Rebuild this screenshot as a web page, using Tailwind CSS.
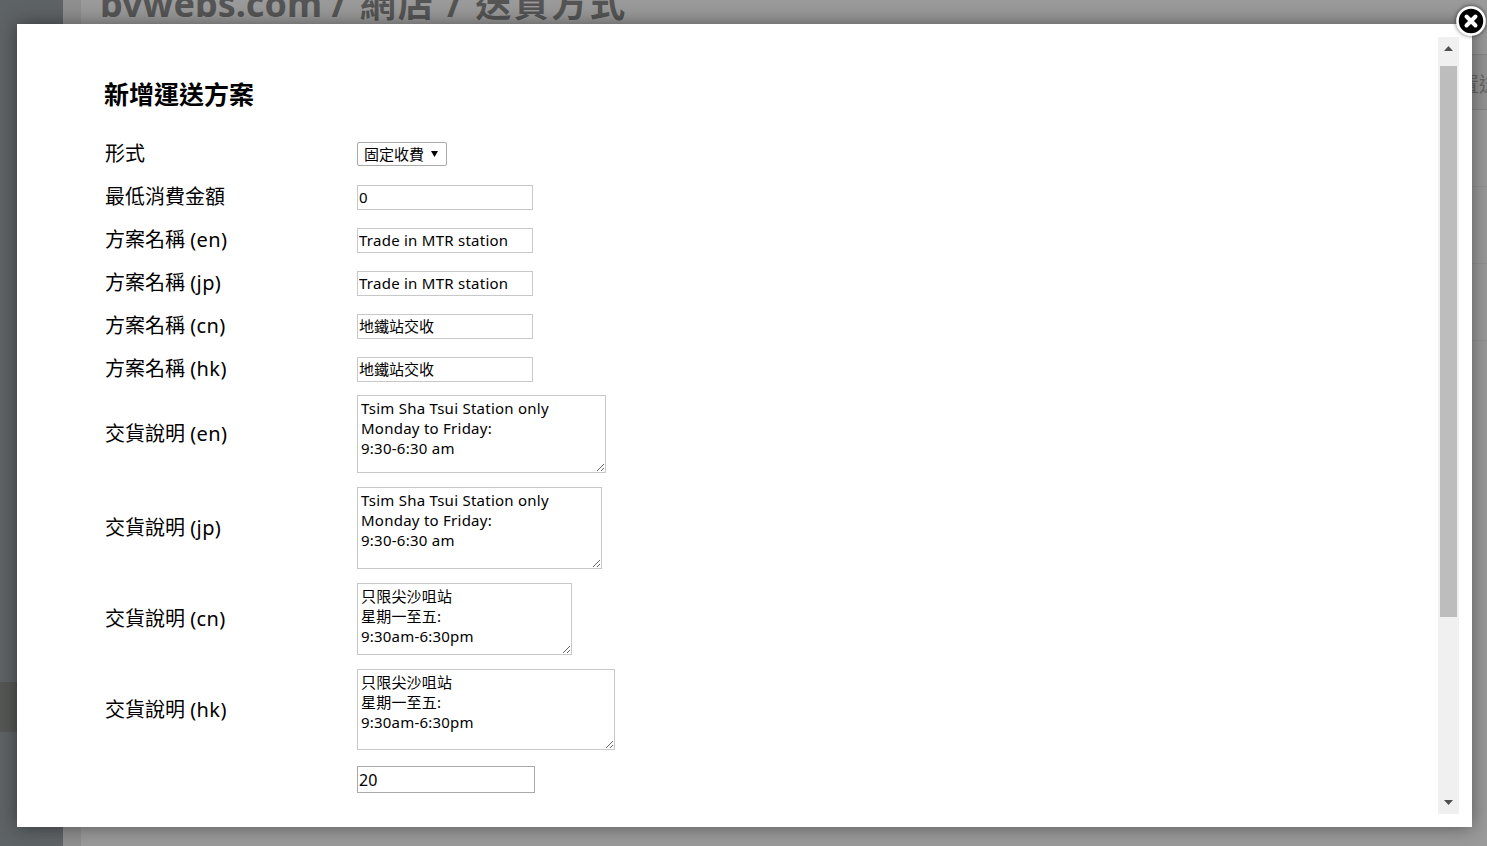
<!DOCTYPE html>
<html lang="zh-Hant">
<head>
    <meta charset="UTF-8">
    <title>新增運送方案</title>
    <script src="https://cdn.jsdelivr.net/npm/@tailwindcss/browser@4"></script>
</head>
<body class="h-[846px] overflow-hidden bg-[#9a9a9a] font-['Noto_Sans','Noto_Sans_CJK_TC',sans-serif] text-black">
    <!-- page behind the overlay -->
    <div class="flex h-[846px]">
        <div class="w-[63px] shrink-0 bg-[#5e6366] flex flex-col">
            <div class="mt-[682px] h-[50px] bg-[#555755]"></div>
        </div>
        <div class="flex-1 min-w-0 overflow-hidden flex">
            <div class="w-[18px] shrink-0 bg-[#8f8f8f]"></div>
            <div class="flex-1 min-w-0">
                <div class="h-[55px] border-b border-[#858585] overflow-hidden">
                    <h1 class="ml-[19px] mt-[-20px] text-[36px] leading-[48px] font-bold text-[#555] whitespace-nowrap">bvwebs.com <span class="tracking-[2px]">/ 網店 / 送貨方式</span></h1>
                </div>
                <div class="h-[55px] bg-[#939393] border-b border-[#858585] pl-[1378px] pt-[6px] flex items-center whitespace-nowrap text-[20px] text-[#666]">置送方式</div>
                <div class="h-[77px] border-b border-[#929292]"></div>
                <div class="h-[77px] border-b border-[#929292]"></div>
                <div class="h-[77px] border-b border-[#929292]"></div>
            </div>
        </div>
    </div>

    <!-- modal -->
    <div class="absolute left-[17px] top-[24px] w-[1455px] h-[803px] bg-white shadow-[0_0_18px_rgba(0,0,0,0.45)] overflow-hidden">
        <div class="pl-[87px] pt-[52px]">
            <h2 class="text-[25px] leading-[36px] font-bold">新增運送方案</h2>

            <div class="mt-[21px] flex flex-col text-[20px]">
                <div class="flex items-center h-[43px]">
                    <label class="w-[253px] pl-[1px] pb-[2px]">形式</label>
                    <div class="relative w-[90px] h-[24px] mb-[2px]">
                        <select class="block appearance-none w-full h-full border border-[#a9a9a9] rounded-[2px] bg-white pl-[6px] text-[15px]">
                            <option>固定收費</option>
                        </select>
                        <svg class="absolute left-[74px] top-[9px] pointer-events-none" width="7" height="6" viewBox="0 0 7 6"><path d="M0 0h7L3.5 6z" fill="#000"/></svg>
                    </div>
                </div>
                <div class="flex items-center h-[43px]">
                    <label class="w-[253px] pl-[1px] pb-[2px]">最低消費金額</label>
                    <input type="text" value="0" class="w-[176px] h-[25px] border border-[#c8c8c8] px-[1px] pb-[2px] text-[15px] tracking-[0.3px]">
                </div>
                <div class="flex items-center h-[43px]">
                    <label class="w-[253px] pl-[1px] pb-[2px]">方案名稱 <span class="tracking-[0.4px]">(en)</span></label>
                    <input type="text" value="Trade in MTR station" class="w-[176px] h-[25px] border border-[#c8c8c8] px-[1px] pb-[2px] text-[15px] tracking-[0.25px]">
                </div>
                <div class="flex items-center h-[43px]">
                    <label class="w-[253px] pl-[1px] pb-[2px]">方案名稱 <span class="tracking-[0.4px]">(jp)</span></label>
                    <input type="text" value="Trade in MTR station" class="w-[176px] h-[25px] border border-[#c8c8c8] px-[1px] pb-[2px] text-[15px] tracking-[0.25px]">
                </div>
                <div class="flex items-center h-[43px]">
                    <label class="w-[253px] pl-[1px] pb-[2px]">方案名稱 <span class="tracking-[0.4px]">(cn)</span></label>
                    <input type="text" value="地鐵站交收" class="w-[176px] h-[25px] border border-[#c8c8c8] px-[1px] pb-[2px] text-[15px]">
                </div>
                <div class="flex items-center h-[43px]">
                    <label class="w-[253px] pl-[1px] pb-[2px]">方案名稱 <span class="tracking-[0.4px]">(hk)</span></label>
                    <input type="text" value="地鐵站交收" class="w-[176px] h-[25px] border border-[#c8c8c8] px-[1px] pb-[2px] text-[15px]">
                </div>

                <div class="flex items-center mt-[4px]">
                    <label class="w-[253px] pl-[1px]">交貨說明 <span class="tracking-[0.4px]">(en)</span></label>
                    <textarea class="w-[249px] h-[78px] border border-[#c8c8c8] px-[3px] pt-[2px] pb-[3px] text-[15px] leading-[20px] tracking-[0.25px]">Tsim Sha Tsui Station only
Monday to Friday:
9:30-6:30 am</textarea>
                </div>
                <div class="flex items-center mt-[14px]">
                    <label class="w-[253px] pl-[1px]">交貨說明 <span class="tracking-[0.4px]">(jp)</span></label>
                    <textarea class="w-[245px] h-[82px] border border-[#c8c8c8] px-[3px] pt-[2px] pb-[3px] text-[15px] leading-[20px] tracking-[0.25px]">Tsim Sha Tsui Station only
Monday to Friday:
9:30-6:30 am</textarea>
                </div>
                <div class="flex items-center mt-[14px]">
                    <label class="w-[253px] pl-[1px]">交貨說明 <span class="tracking-[0.4px]">(cn)</span></label>
                    <textarea class="w-[215px] h-[72px] border border-[#c8c8c8] px-[3px] pt-[2px] pb-[3px] text-[15px] leading-[20px] tracking-[0.2px]">只限尖沙咀站
星期一至五:
9:30am-6:30pm</textarea>
                </div>
                <div class="flex items-center mt-[14px]">
                    <label class="w-[253px] pl-[1px]">交貨說明 <span class="tracking-[0.4px]">(hk)</span></label>
                    <textarea class="w-[258px] h-[81px] border border-[#c8c8c8] px-[3px] pt-[2px] pb-[3px] text-[15px] leading-[20px] tracking-[0.2px]">只限尖沙咀站
星期一至五:
9:30am-6:30pm</textarea>
                </div>
                <div class="flex items-center mt-[16px]">
                    <div class="w-[253px]"></div>
                    <input type="text" value="20" class="w-[178px] h-[27px] border border-[#a9a9a9] px-[1px] text-[16px]">
                </div>
            </div>
        </div>

        <!-- scrollbar -->
        <div class="absolute left-[1421px] top-[13px] w-[21px] h-[777px] bg-[#f0f0f0]">
            <svg class="absolute left-[6px] top-[9px]" width="9" height="5" viewBox="0 0 9 5"><path d="M4.5 0 9 5H0z" fill="#505050"/></svg>
            <div class="absolute left-[2px] top-[29px] w-[17px] h-[551px] bg-[#bdbdbd]"></div>
            <svg class="absolute left-[6px] top-[763px]" width="9" height="5" viewBox="0 0 9 5"><path d="M0 0h9L4.5 5z" fill="#505050"/></svg>
        </div>
    </div>

    <!-- close button -->
    <button class="absolute left-[1456px] top-[6px] w-[30px] h-[30px] rounded-full shadow-[0_0_4px_rgba(0,0,0,0.6)]">
        <svg width="30" height="30" viewBox="0 0 30 30">
            <circle cx="15" cy="15" r="13.5" fill="#000" stroke="#fff" stroke-width="2.5"/>
            <path d="M10.5 10.5 19.5 19.5M19.5 10.5 10.5 19.5" stroke="#fff" stroke-width="4" stroke-linecap="round"/>
        </svg>
    </button>
</body>
</html>
